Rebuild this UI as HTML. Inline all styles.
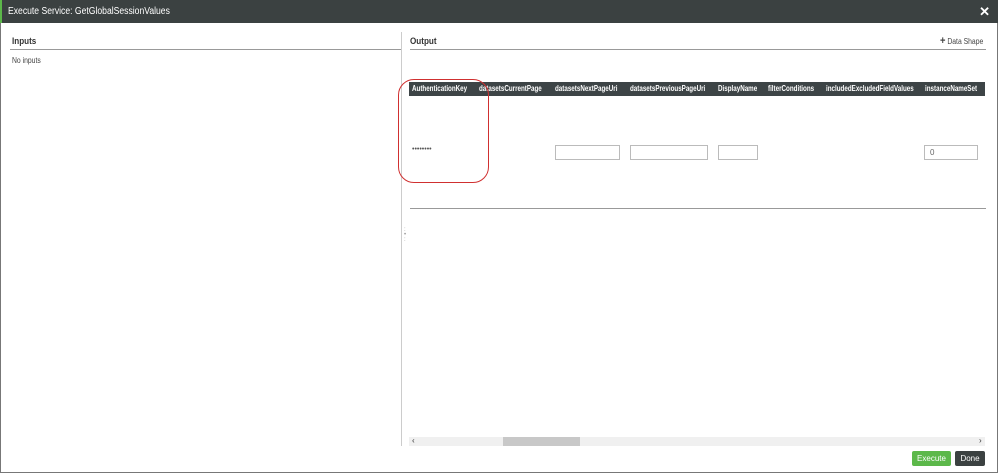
<!DOCTYPE html>
<html><head><style>
*{margin:0;padding:0;box-sizing:border-box}
body{width:998px;height:473px;overflow:hidden;background:#fff;font-family:"Liberation Sans",sans-serif;position:relative}
.a{position:absolute}
.hdr{left:0;top:0;width:998px;height:23px;background:#3b4141;border-left:2px solid #5cb84a}
.th{font-size:8px;font-weight:bold;color:#fff;top:82px;line-height:14px;transform:scaleX(0.78);transform-origin:0 0;white-space:nowrap}
.in{border:1px solid #bbb;height:15px;top:145px;background:#fff;font-size:8px;color:#666;padding-left:5px;line-height:13px}
.sx{transform-origin:0 0;white-space:nowrap}
</style></head><body>
<div class="a" style="left:0;top:0;width:998px;height:473px;border:1px solid #777"></div>
<div class="a hdr"></div>
<div class="a sx" style="left:8px;top:6px;color:#fff;font-size:10px;transform:scaleX(0.86)">Execute Service: GetGlobalSessionValues</div>
<div class="a" style="right:8px;top:4px;color:#fff;font-size:13px;font-weight:bold">✕</div>
<div class="a sx" style="left:12px;top:36px;font-size:9px;font-weight:bold;color:#333;transform:scaleX(0.9)">Inputs</div>
<div class="a" style="left:10px;top:49px;width:392px;height:1px;background:#999"></div>
<div class="a sx" style="left:12px;top:56px;font-size:8px;color:#444;transform:scaleX(0.85)">No inputs</div>
<div class="a" style="left:401px;top:32px;width:1px;height:414px;background:#ccc"></div>
<div class="a" style="left:404px;top:228px;font-size:6px;color:#999;line-height:5px">:<br>•<br>:</div>
<div class="a sx" style="left:410px;top:36px;font-size:9px;font-weight:bold;color:#333;transform:scaleX(0.9)">Output</div>
<div class="a sx" style="left:940px;top:35px;font-size:8px;color:#444;transform:scaleX(0.85)"><b style="font-size:11px">+</b> Data Shape</div>
<div class="a" style="left:410px;top:49px;width:576px;height:1px;background:#999"></div>
<div class="a" style="left:409px;top:82px;width:576px;height:14px;background:#3d4446"></div>
<div class="a th" style="left:412px">AuthenticationKey</div>
<div class="a th" style="left:479px">datasetsCurrentPage</div>
<div class="a th" style="left:555px">datasetsNextPageUri</div>
<div class="a th" style="left:630px">datasetsPreviousPageUri</div>
<div class="a th" style="left:718px">DisplayName</div>
<div class="a th" style="left:768px">filterConditions</div>
<div class="a th" style="left:826px">includedExcludedFieldValues</div>
<div class="a th" style="left:925px">instanceNameSet</div>
<div class="a" style="left:412px;top:146px;font-size:7px;color:#555">••••••••</div>
<div class="a in" style="left:555px;width:65px"></div>
<div class="a in" style="left:630px;width:78px"></div>
<div class="a in" style="left:718px;width:40px"></div>
<div class="a in" style="left:924px;width:54px">0</div>
<div class="a" style="left:398px;top:79px;width:91px;height:104px;border:1.5px solid #d03030;border-radius:16px"></div>
<div class="a" style="left:410px;top:208px;width:576px;height:1px;background:#999"></div>
<div class="a" style="left:409px;top:437px;width:576px;height:9px;background:#f0f0f0"></div>
<div class="a" style="left:503px;top:437px;width:77px;height:9px;background:#c8c8c8"></div>
<div class="a" style="left:412px;top:436px;font-size:8px;color:#333">‹</div>
<div class="a" style="left:979px;top:436px;font-size:8px;color:#333">›</div>
<div class="a" style="left:912px;top:451px;width:39px;height:15px;background:#5cb84a;color:#fff;font-size:8px;text-align:center;line-height:15px;border-radius:2px">Execute</div>
<div class="a" style="left:955px;top:451px;width:30px;height:15px;background:#3b4141;color:#fff;font-size:8px;text-align:center;line-height:15px;border-radius:2px">Done</div>
</body></html>
